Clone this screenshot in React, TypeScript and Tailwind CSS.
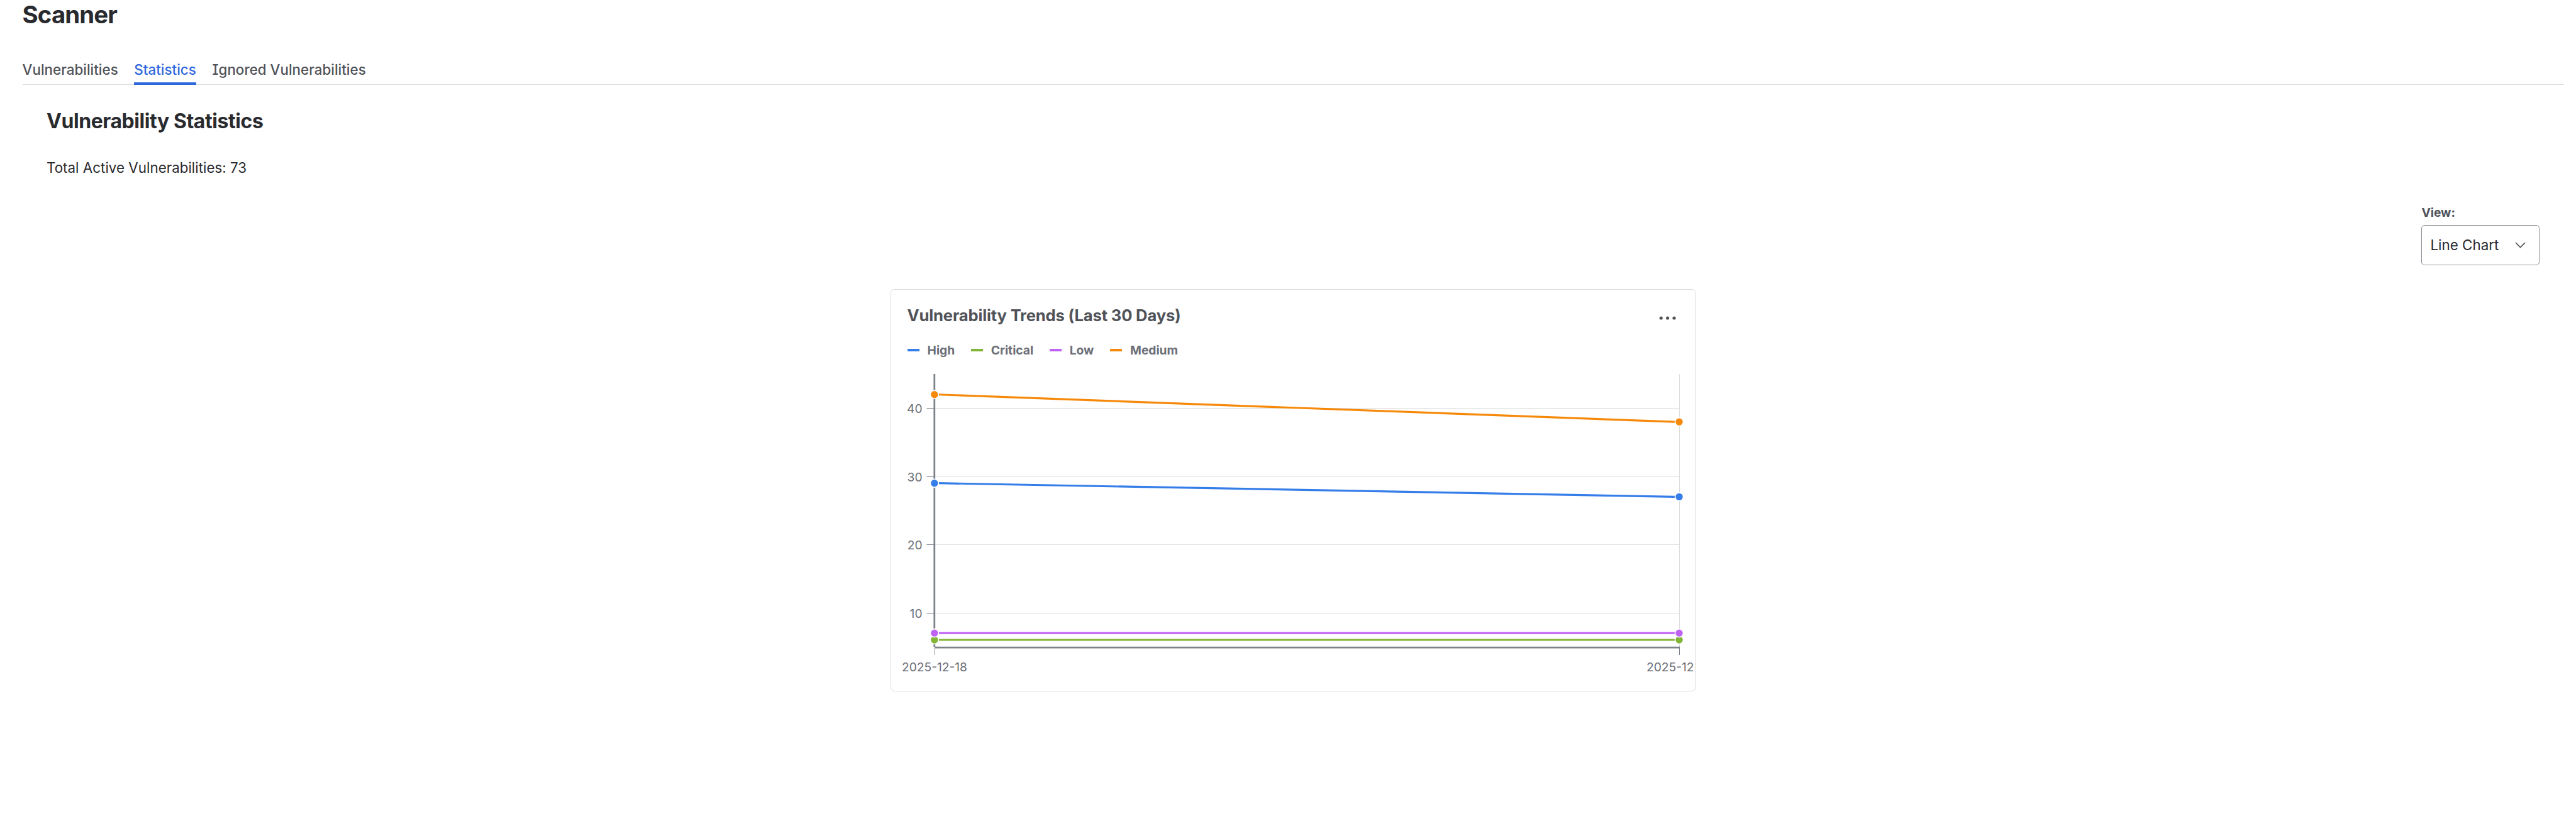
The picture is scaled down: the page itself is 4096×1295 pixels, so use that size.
type Series = {
  name: string
  color: string
  values: [number, number]
}

const TABS = ["Vulnerabilities", "Statistics", "Ignored Vulnerabilities"]

const SERIES: Series[] = [
  { name: "High", color: "#357de8", values: [29, 27] },
  { name: "Critical", color: "#82b536", values: [6, 6] },
  { name: "Low", color: "#bf63f3", values: [7, 7] },
  { name: "Medium", color: "#f68909", values: [42, 38] },
]

const TICKS = [
  { value: 40, y: 188.5 },
  { value: 30, y: 297.5 },
  { value: 20, y: 405.5 },
  { value: 10, y: 514.5 },
]

const X0 = 69.5
const X1 = 1253.5
const TOP = 134
const BOTTOM = 569

const yFor = (value: number) => 557 - (value - 6) * 10.84

function TrendChart() {
  return (
    <svg
      className="absolute inset-0"
      width="1278"
      height="638"
      viewBox="0 0 1278 638"
      fontFamily="Inter, sans-serif"
      fontSize="19.2"
      fill="#6b6e76"
    >
      {TICKS.map((tick) => (
        <g key={tick.value}>
          <line x1={X0} x2={X1} y1={tick.y} y2={tick.y} stroke="#dcdddf" />
          <line x1={56.5} x2={X0} y1={tick.y} y2={tick.y} stroke="#7d818a" />
          <text x={49.5} y={tick.y + 7} textAnchor="end">
            {tick.value}
          </text>
        </g>
      ))}
      <line x1={X0} x2={X0} y1={TOP} y2={BOTTOM} stroke="#dcdddf" />
      <line x1={X1} x2={X1} y1={TOP} y2={BOTTOM} stroke="#dcdddf" />
      <line x1={68.8} x2={68.8} y1={TOP} y2={BOTTOM - 1} stroke="#7d818a" strokeWidth={2.8} />
      <line x1={X0} x2={X1 + 0.5} y1={569.2} y2={569.2} stroke="#7d818a" strokeWidth={2.8} />
      <line x1={X0} x2={X0} y1={BOTTOM} y2={581} stroke="#7d818a" />
      <line x1={X1} x2={X1} y1={BOTTOM} y2={581} stroke="#7d818a" />
      <text x={69} y={607} textAnchor="middle">
        2025-12-18
      </text>
      <text x={1253} y={607} textAnchor="middle">
        2025-12-19
      </text>
      {SERIES.map((s) => (
        <g key={s.name}>
          <line
            x1={76}
            x2={1246}
            y1={yFor(s.values[0])}
            y2={yFor(s.values[1])}
            stroke={s.color}
            strokeWidth={3.2}
          />
          <circle cx={68.8} cy={yFor(s.values[0])} r={6.5} fill={s.color} stroke="#fff" strokeWidth={1.6} />
          <circle cx={1253} cy={yFor(s.values[1])} r={6.5} fill={s.color} stroke="#fff" strokeWidth={1.6} />
        </g>
      ))}
    </svg>
  )
}

function ChartCard() {
  return (
    <section className="relative mx-auto h-[640px] w-[1280px] overflow-hidden rounded-[6px] border border-[#dcdddf] pt-[22px] pl-[25.6px]">
      <TrendChart />
      <div className="flex items-center justify-between pr-[29px]">
        <h3 className="text-[25.6px] leading-[38px] font-bold tracking-[-0.17px] text-[#505258]">
          Vulnerability Trends (Last 30 Days)
        </h3>
        <svg className="mt-[7px]" width="28" height="8" viewBox="0 0 28 8" fill="#505258">
          <circle cx="3.2" cy="4" r="2.6" />
          <circle cx="13.6" cy="4" r="2.6" />
          <circle cx="24" cy="4" r="2.6" />
        </svg>
      </div>
      <ul className="mt-[22px] flex gap-[25.6px]">
        {SERIES.map((s) => (
          <li key={s.name} className="flex items-center gap-[12.8px]">
            <span className="h-[3.6px] w-[19.2px]" style={{ backgroundColor: s.color }} />
            <span className="text-[19.2px] leading-[28px] font-bold text-[#6b6e76]">{s.name}</span>
          </li>
        ))}
      </ul>
    </section>
  )
}

export default function App() {
  return (
    <main className="h-[1295px] w-[4096px] overflow-hidden bg-white pl-[35.6px] font-[Inter,sans-serif] text-[#292a2e] [font-feature-settings:'cv08']">
      <h1 className="text-[38.4px] leading-[46px] font-bold tracking-[-0.9px]">Scanner</h1>

      <nav className="mt-[48px] mr-[19.4px] flex h-[41px] gap-[25.6px] border-b border-[#dcdddf]">
        {TABS.map((tab) => (
          <button
            key={tab}
            type="button"
            className={
              tab === "Statistics"
                ? "h-[41px] border-b-4 border-[#2f68dc] pb-[4px] text-[22.4px] font-medium text-[#2f68dc]"
                : "h-[41px] pb-[8px] text-[22.4px] font-medium text-[#505258]"
            }
          >
            {tab}
          </button>
        ))}
      </nav>

      <div className="pt-[38px] pr-[57.6px] pl-[38.4px]">
        <h2 className="text-[32px] leading-[40px] font-bold tracking-[-0.44px]">Vulnerability Statistics</h2>
        <p className="mt-[38px] text-[22.4px] leading-[32px]">Total Active Vulnerabilities: 73</p>

        <div className="mt-[42px] flex justify-end">
          <div className="w-[188px]">
            <label className="block text-[19.2px] leading-[26px] font-bold text-[#505258]">View:</label>
            <button
              type="button"
              className="mt-[7px] flex h-[64px] w-full items-center justify-between rounded-[5px] border border-[#8c8f97] pr-[21px] pl-[13px] text-[22.4px]"
            >
              Line Chart
              <svg width="17" height="10" viewBox="0 0 17 10" fill="none" stroke="#505258" strokeWidth="1.7">
                <path d="M1 1l7.5 7.5L16 1" />
              </svg>
            </button>
          </div>
        </div>
      </div>

      <div className="mt-[38px] -ml-[19.6px]">
        <ChartCard />
      </div>
    </main>
  )
}
